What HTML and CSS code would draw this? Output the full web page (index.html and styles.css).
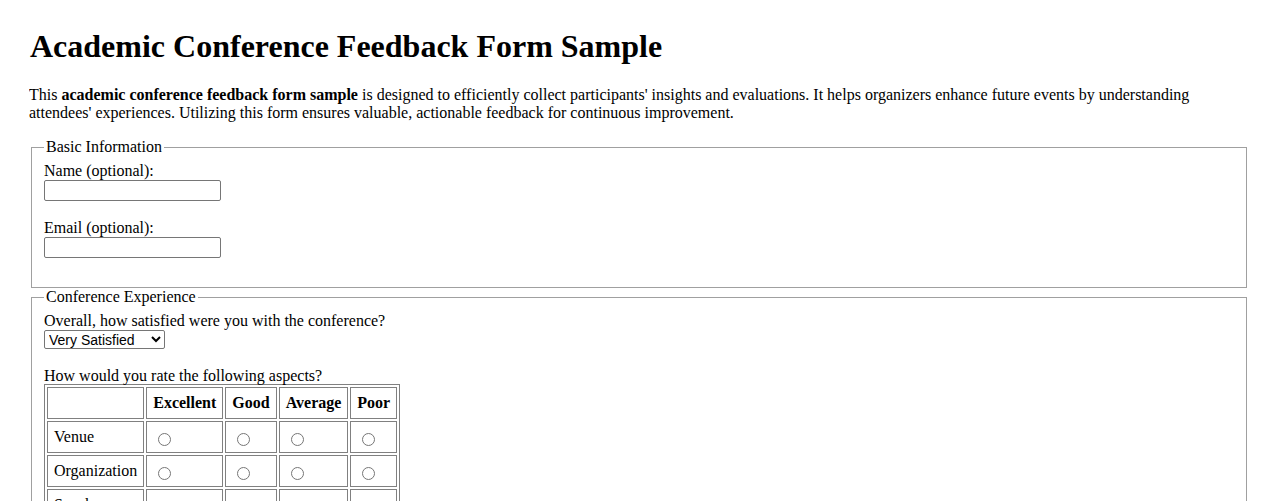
FILE: index.html
```html
<!DOCTYPE html>
<html lang="en">
<head>
<meta charset="utf-8">
<title>Academic Conference Feedback Form Sample</title>
<link rel="stylesheet" href="styles.css">
</head>
<body class="page">
<h1 class="title">Academic Conference Feedback Form Sample</h1>
<p class="intro">This <strong>academic conference feedback form sample</strong> is designed to efficiently collect participants' insights and evaluations. It helps organizers enhance future events by understanding attendees' experiences. Utilizing this form ensures valuable, actionable feedback for continuous improvement.</p>
<form class="form">
  <fieldset class="group group-first">
    <legend class="group-title">Basic Information</legend>
    <label class="label" for="name">Name (optional):</label><br>
    <input class="text-input" type="text" id="name" name="name"><br><br>
    <label class="label" for="email">Email (optional):</label><br>
    <input class="text-input" type="email" id="email" name="email"><br><br>
  </fieldset>
  <fieldset class="group">
    <legend class="group-title">Conference Experience</legend>
    <label class="label" for="overall">Overall, how satisfied were you with the conference?</label><br>
    <select class="select" id="overall" name="overall">
      <option>Very Satisfied</option>
      <option>Satisfied</option>
      <option>Neutral</option>
      <option>Dissatisfied</option>
      <option>Very Dissatisfied</option>
    </select><br><br>
    <span class="label">How would you rate the following aspects?</span><br>
    <table class="rating">
      <tr><th class="cell"></th><th class="cell">Excellent</th><th class="cell">Good</th><th class="cell">Average</th><th class="cell">Poor</th></tr>
      <tr><td class="cell">Venue</td><td class="cell"><input class="radio" type="radio" name="venue"></td><td class="cell"><input class="radio" type="radio" name="venue"></td><td class="cell"><input class="radio" type="radio" name="venue"></td><td class="cell"><input class="radio" type="radio" name="venue"></td></tr>
      <tr><td class="cell">Organization</td><td class="cell"><input class="radio" type="radio" name="org"></td><td class="cell"><input class="radio" type="radio" name="org"></td><td class="cell"><input class="radio" type="radio" name="org"></td><td class="cell"><input class="radio" type="radio" name="org"></td></tr>
      <tr><td class="cell">Speakers</td><td class="cell"><input class="radio" type="radio" name="spk"></td><td class="cell"><input class="radio" type="radio" name="spk"></td><td class="cell"><input class="radio" type="radio" name="spk"></td><td class="cell"><input class="radio" type="radio" name="spk"></td></tr>
      <tr><td class="cell">Sessions</td><td class="cell"><input class="radio" type="radio" name="ses"></td><td class="cell"><input class="radio" type="radio" name="ses"></td><td class="cell"><input class="radio" type="radio" name="ses"></td><td class="cell"><input class="radio" type="radio" name="ses"></td></tr>
    </table>
  </fieldset>
</form>
</body>
</html>
```
FILE: styles.css
```css
html, body {
  background: #fff;
}
.page {
  margin: 28px 29px;
  font-family: "Liberation Serif", "Times New Roman", serif;
  font-size: 16px;
  color: #000;
}
.title {
  font-size: 32px;
  font-weight: bold;
  margin: 0 0 21px 1px;
}
.intro {
  margin: 0 0 16px 0;
  line-height: 18px;
}
.form {
  margin: 0;
}
.group {
  margin: 0 2px 0 2px;
  padding: 6px 12px 10px 12px;
  border: 1px solid #a0a0a0;
}
.group-first {
  padding-bottom: 11px;
}
.group-title {
  padding: 0 2px;
}
.text-input {
  width: 177px;
  height: 21px;
  box-sizing: border-box;
  border: 1px solid #767676;
  border-radius: 2px;
  margin: 0;
  padding: 1px 2px;
  font-family: "Liberation Sans", Arial, sans-serif;
  font-size: 13.33px;
}
.select {
  width: 121px;
  height: 19px;
  box-sizing: border-box;
  font-family: "Liberation Sans", Arial, sans-serif;
  font-size: 14px;
  border: 1px solid #767676;
  border-radius: 2px;
  margin: 0;
  background: #fff;
  color: #000;
}
.rating {
  border: 1px solid #808080;
  border-spacing: 2px;
  margin-top: -1px;
}
.cell {
  border: 1px solid #808080;
  padding: 6px;
  height: 18px;
  line-height: 18px;
  box-sizing: content-box;
  text-align: left;
  vertical-align: middle;
}
.radio {
  margin: 0 3px 0 5px;
  vertical-align: middle;
  position: relative;
  top: 1px;
}
```
